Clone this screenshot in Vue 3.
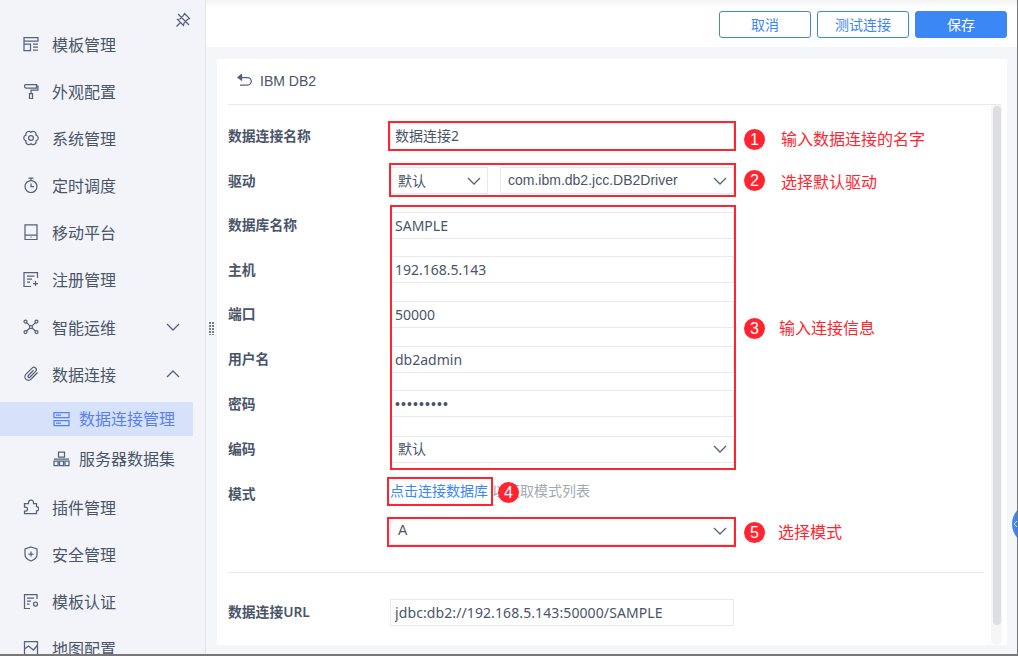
<script setup>
const chevron = 'M1 1l6 6 6-6'
const menuTop = [
  { label: '模板管理', d: 'M1 1.500h14v3.500H1z M1 5v9.500h6.500V8H1 M10 8h5 M10 11h5 M10 14h5' },
  { label: '外观配置', d: 'M3 1.500h10.500v3.500H3a1.500 1.750 0 0 1 0-3.500z M13.500 3.200h1.500v4H8v3 M6.500 10.500h3v5h-3z' },
  { label: '系统管理', d: 'M13 5.100A3 3 0 0 1 13 10.900A3 3 0 0 1 8 13.800A3 3 0 0 1 3 10.900A3 3 0 0 1 3 5.100A3 3 0 0 1 8 2.200A3 3 0 0 1 13 5.100z M10.400 8a2.400 2.400 0 1 1-4.800 0a2.400 2.400 0 1 1 4.800 0z' },
  { label: '定时调度', d: 'M14 9.500a6 6 0 1 1-12 0a6 6 0 1 1 12 0z M5.500 1h5 M8 1v2.500 M8 6.500v3.200h3' },
  { label: '移动平台', d: 'M2 .8h12v14.700H2z M2 11h12 M7.500 13.200h1' },
  { label: '注册管理', d: 'M14.500 7V1.500H1v14H8 M4 5h7.500 M4 8h5 M4 11h3 M12.500 10v5 M10 12.500h5' },
  { label: '智能运维', d: 'M4 2.500a1.500 1.500 0 1 1-3 0a1.500 1.500 0 1 1 3 0z M15 2.500a1.500 1.500 0 1 1-3 0a1.500 1.500 0 1 1 3 0z M4 13a1.500 1.500 0 1 1-3 0a1.500 1.500 0 1 1 3 0z M15 13a1.500 1.500 0 1 1-3 0a1.500 1.500 0 1 1 3 0z M9.500 8a1.500 1.500 0 1 1-3 0a1.500 1.500 0 1 1 3 0z M3.600 3.600l3.300 3.300 M12.400 3.600l-3.300 3.300 M3.600 12l3.300-3 M12.400 12l-3.300-3', chevron: 'down' },
  { label: '数据连接', d: 'M14.500 6.500 8 13.200a3.500 3.500 0 0 1-5.200-4.800l6.300-6.300a2.400 2.400 0 0 1 3.500 3.300L6.800 11.200a1.100 1.100 0 0 1-1.600-1.500L10.500 4.300', chevron: 'up' }
]
const subMenu = [
  { label: '数据连接管理', active: true, d: 'M1 1.500h15v5H1z M1 9.500h15v5H1z M3 4h5 M3 12h5' },
  { label: '服务器数据集', d: 'M5.500 1h6v5h-6z M1 10h4v4.500H1z M6.500 10h4v4.500h-4z M12 10h4v4.500h-4z M1 8h15' }
]
const menuBottom = [
  { label: '插件管理', d: 'M5.500 4.500V3.500a2.500 2.500 0 0 1 5 0v1h3v3a2.200 2.200 0 0 1 0 4.400v2.600H1.500v-2.500h1a2 2 0 0 0 0-4h-1V4.500z' },
  { label: '安全管理', d: 'M8 1 14 3v5.500c0 3.500-3 5.500-6 6.500-3-1-6-3-6-6.500V3z M8 5.500v5 M5.500 8h5' },
  { label: '模板认证', d: 'M14 6V1.500H1.500v14H7 M4 5h7 M4 8h4 M4 11h2.500 M14.500 11a2 2 0 1 1-4 0a2 2 0 1 1 4 0z' },
  { label: '地图配置', d: 'M1.500 1.500h13v13h-13z M1.500 9l4-3 5 4 4-5' }
]
const fields = [
  { label: '数据库名称', value: 'SAMPLE' },
  { label: '主机', value: '192.168.5.143' },
  { label: '端口', value: '50000' },
  { label: '用户名', value: 'db2admin' },
  { label: '密码', value: '123456789', type: 'password' }
]
const marks = [
  { n: 1, cls: 'm1', text: '输入数据连接的名字' },
  { n: 2, cls: 'm2', text: '选择默认驱动' },
  { n: 3, cls: 'm3', text: '输入连接信息' },
  { n: 4, cls: 'm4', text: '' },
  { n: 5, cls: 'm5', text: '选择模式' }
]
</script>

<template>
  <div class="app">
    <aside class="side">
      <div class="pin">
        <svg width="16" height="16" viewBox="0 0 16 16" class="line">
          <path d="M9.500 1.500 14.500 6.500 12.500 7.500 9 11 8.500 13.500 2.500 7.500 5 7 8.500 3.500z M1.500 14.500 5.500 10.500 M3 2l11 11" />
        </svg>
      </div>
      <div v-for="m in menuTop" :key="m.label" class="item">
        <svg width="16" height="16" viewBox="0 0 16 16" class="line"><path :d="m.d" /></svg>
        <span>{{ m.label }}</span>
        <svg v-if="m.chevron" width="14" height="8" viewBox="0 0 14 8" class="line chev" :class="{ up: m.chevron === 'up' }">
          <path :d="chevron" />
        </svg>
      </div>
      <div class="subs">
        <div v-for="s in subMenu" :key="s.label" class="sub" :class="{ active: s.active }">
          <svg width="17" height="16" viewBox="0 0 17 16" class="line"><path :d="s.d" /></svg>
          <span>{{ s.label }}</span>
        </div>
      </div>
      <div v-for="m in menuBottom" :key="m.label" class="item">
        <svg width="16" height="16" viewBox="0 0 16 16" class="line"><path :d="m.d" /></svg>
        <span>{{ m.label }}</span>
      </div>
    </aside>

    <main class="main">
      <header class="top">
        <button class="btn">取消</button>
        <button class="btn">测试连接</button>
        <button class="btn primary">保存</button>
      </header>
      <div class="body">
        <section class="card">
          <div class="title">
            <svg width="15" height="13" viewBox="0 0 15 13" class="line">
              <path d="M1 3.500h9.500a3.500 3.500 0 0 1 0 7.500H3" />
              <path d="M4.500.5 1 3.500 4.500 6z" class="solid" />
            </svg>
            <span>IBM DB2</span>
          </div>
          <div class="scroller">
            <form class="form" @submit.prevent>
              <div class="row">
                <label>数据连接名称</label>
                <input class="ctl name" value="数据连接2" />
              </div>
              <div class="row">
                <label>驱动</label>
                <div class="pair">
                  <div class="select small">
                    <span>默认</span>
                    <svg width="14" height="8" viewBox="0 0 14 8" class="line"><path :d="chevron" /></svg>
                  </div>
                  <div class="select grow">
                    <span>com.ibm.db2.jcc.DB2Driver</span>
                    <svg width="14" height="8" viewBox="0 0 14 8" class="line"><path :d="chevron" /></svg>
                  </div>
                </div>
              </div>
              <div v-for="f in fields" :key="f.label" class="row">
                <label>{{ f.label }}</label>
                <input class="ctl" :class="{ pw: f.type }" :type="f.type || 'text'" :value="f.value" />
              </div>
              <div class="row enc">
                <label>编码</label>
                <div class="select">
                  <span>默认</span>
                  <svg width="14" height="8" viewBox="0 0 14 8" class="line"><path :d="chevron" /></svg>
                </div>
              </div>
              <div class="row mode">
                <label>模式</label>
                <div class="hint"><a>点击连接数据库</a><span>以获取模式列表</span></div>
              </div>
              <div class="row schema">
                <label></label>
                <div class="select">
                  <span>A</span>
                  <svg width="14" height="8" viewBox="0 0 14 8" class="line"><path :d="chevron" /></svg>
                </div>
              </div>
              <hr class="rule" />
              <div class="row url">
                <label>数据连接URL</label>
                <input class="ctl link" value="jdbc:db2://192.168.5.143:50000/SAMPLE" />
              </div>
            </form>
            <div class="track"><div class="thumb"></div></div>
          </div>
        </section>
      </div>
    </main>

    <div class="grip"></div>
    <div class="edge-tab">
      <svg width="5" height="8" viewBox="0 0 5 8"><path d="M4 1 1 4l3 3" /></svg>
    </div>

    <div class="box b1"></div>
    <div class="box b2"></div>
    <div class="box b3"></div>
    <div class="box b4"></div>
    <div class="box b5"></div>
    <div v-for="m in marks" :key="m.n" class="mark" :class="m.cls">
      <b>{{ m.n }}</b>
      <span v-if="m.text">{{ m.text }}</span>
    </div>
  </div>
</template>

<style scoped>
.app {
  position: relative;
  display: flex;
  width: 1018px;
  height: 656px;
  overflow: hidden;
  box-sizing: border-box;
  background: #f5f6f8;
  border-right: 1px solid #777;
  border-bottom: 2px solid #777;
  color: #4a5568;
  font: 14px "Noto Sans", "Noto Sans CJK SC", sans-serif;
}
.side {
  flex: none;
  box-sizing: border-box;
  width: 206px;
  height: 100%;
  background: #f2f4f9;
  border-right: 1px solid #e3e5ea;
  overflow: hidden;
}
.line {
  flex: none;
  fill: none;
  stroke: #56617a;
  stroke-width: 1.25;
}
.solid {
  fill: #56617a;
}
.pin {
  display: flex;
  justify-content: flex-end;
  height: 20.2px;
  padding: 12px 14px 0 0;
  box-sizing: border-box;
}
.item {
  display: flex;
  align-items: center;
  gap: 13px;
  box-sizing: border-box;
  height: 47.14px;
  padding-left: 23px;
  font-size: 16px;
}
.chev {
  margin-left: 37px;
}
.chev.up {
  transform: rotate(180deg);
}
.subs {
  display: flex;
  flex-direction: column;
  gap: 6px;
  width: 193px;
  margin: 5px 0 7.3px;
}
.sub {
  display: flex;
  align-items: center;
  gap: 9px;
  height: 34px;
  padding-left: 53px;
  font-size: 16px;
}
.sub span {
  padding-bottom: 2px;
}
.sub.active {
  background: #d5e2f9;
  color: #5a7ff5;
}
.sub.active .line {
  stroke: #5a7ff5;
}
.main {
  flex: 1;
  display: flex;
  flex-direction: column;
  min-width: 0;
}
.top {
  display: flex;
  flex: none;
  justify-content: flex-end;
  align-items: center;
  gap: 6px;
  height: 47px;
  padding: 2px 10px 0 0;
  box-sizing: border-box;
  background: linear-gradient(#f2f2f3, #fff 7px);
}
.btn {
  width: 92px;
  height: 27px;
  padding: 0 0 2px;
  border: 1px solid #3b87f5;
  border-radius: 3px;
  background: #fff;
  color: #3b87f5;
  font: inherit;
}
.btn.primary {
  background: #3b87f5;
  color: #fff;
}
.body {
  flex: 1;
  padding: 12px 10px 9px 11px;
  min-height: 0;
}
.card {
  display: flex;
  flex-direction: column;
  height: 100%;
  box-sizing: border-box;
  padding-left: 11px;
  background: #fff;
}
.title {
  flex: none;
  display: flex;
  align-items: center;
  gap: 8px;
  box-sizing: border-box;
  height: 46px;
  padding: 0 0 2px 9px;
  border-bottom: 1px solid #e8e9ed;
  margin-right: 6px;
  font-family: "Liberation Sans", sans-serif;
}
.scroller {
  position: relative;
  flex: 1;
  min-height: 0;
}
.form {
  padding-top: 17.6px;
  width: 756px;
}
.row {
  display: flex;
  align-items: center;
  height: 27px;
  margin-bottom: 17.6px;
}
.row label {
  flex: none;
  width: 162px;
  padding-bottom: 2px;
  font-weight: 600;
  font-size: 13.8px;
}
.ctl {
  box-sizing: border-box;
  width: 344px;
  height: 27px;
  padding: 0 4px;
  border: 1px solid #e8e9ee;
  border-radius: 0;
  outline: none;
  color: #4a5568;
  font: inherit;
}
.name {
  padding-bottom: 2px;
}
.link {
  letter-spacing: 0.1px;
}
.pw {
  font-family: "Liberation Sans", sans-serif;
  letter-spacing: 1.1px;
}
.pair {
  display: flex;
  gap: 12px;
  width: 344px;
}
.select {
  display: flex;
  flex: none;
  align-items: center;
  justify-content: space-between;
  box-sizing: border-box;
  width: 344px;
  height: 27px;
  padding: 0 6px 0 7px;
  border: 1px solid #e8e9ee;
  font-family: "Liberation Sans", "Noto Sans CJK SC", sans-serif;
}
.select span {
  padding-bottom: 2px;
}
.select.small {
  width: 98px;
}
.select.grow {
  width: 234px;
}
.enc {
  margin-top: 18.4px;
  margin-bottom: 15px;
}
.mode {
  margin-bottom: 0;
}
.mode label {
  padding: 4px 0 0;
}
.hint {
  padding-bottom: 2px;
  color: #a4a9b3;
}
.hint a {
  color: #3b87f5;
}
.hint span {
  margin-left: 4px;
}
.schema {
  margin-top: 13px;
  margin-bottom: 0;
}
.rule {
  margin: 27px 0 26px;
  border: 0;
  border-top: 1px solid #e8e9ed;
}
.url {
  margin-bottom: 0;
}
.track {
  position: absolute;
  top: 0;
  right: 5px;
  bottom: 0;
  width: 11px;
  border-radius: 0 0 5px 5px;
  background: #f6f6f7;
}
.thumb {
  width: 8px;
  height: 519px;
  margin: 1px 0 0 2px;
  border-radius: 4px;
  background: #dcdee2;
}
.grip {
  position: absolute;
  left: 209px;
  top: 322px;
  width: 5px;
  height: 13px;
  background: radial-gradient(circle at 1px 1px, #7a8292 1px, transparent 1px) 0 0 / 3px 3px;
}
.edge-tab {
  position: absolute;
  left: 1012px;
  top: 503px;
  width: 42px;
  height: 42px;
  border-radius: 50%;
  background: #3b87f5;
}
.edge-tab svg {
  display: block;
  margin: 17px 0 0 1px;
  fill: none;
  stroke: #cfe0fb;
  stroke-width: 1;
}
.box {
  position: absolute;
  box-sizing: border-box;
  border: 2.4px solid #ff242f;
}
.b1 { left: 388px; top: 121px; width: 348px; height: 30px; }
.b2 { left: 389px; top: 163px; width: 347px; height: 34px; }
.b3 { left: 390px; top: 205px; width: 346px; height: 265px; }
.b4 { left: 387px; top: 477px; width: 106px; height: 29px; }
.b5 { left: 387px; top: 517px; width: 349px; height: 30px; }
.mark {
  position: absolute;
  display: flex;
  align-items: center;
  height: 22px;
  color: #ff242f;
  font-size: 16px;
  white-space: nowrap;
}
.mark b {
  flex: none;
  width: 21px;
  height: 21px;
  border-radius: 50%;
  background: #ff242f;
  color: #fff;
  font: 400 16px/21px "Liberation Sans", sans-serif;
  text-align: center;
}
.mark span {
  margin-left: 16px;
  padding-bottom: 2px;
}
.m1 { left: 744px; top: 128px; }
.m2 { left: 744px; top: 169.5px; }
.m2 span { padding: 1px 0 0; }
.m3 { left: 744px; top: 317px; }
.m3 span { margin-left: 14px; }
.m4 { left: 498px; top: 481px; }
.m5 { left: 744px; top: 521px; }
.m5 span { margin-left: 13px; }
</style>

<style>
html, body { margin: 0; overflow: hidden; }
</style>
